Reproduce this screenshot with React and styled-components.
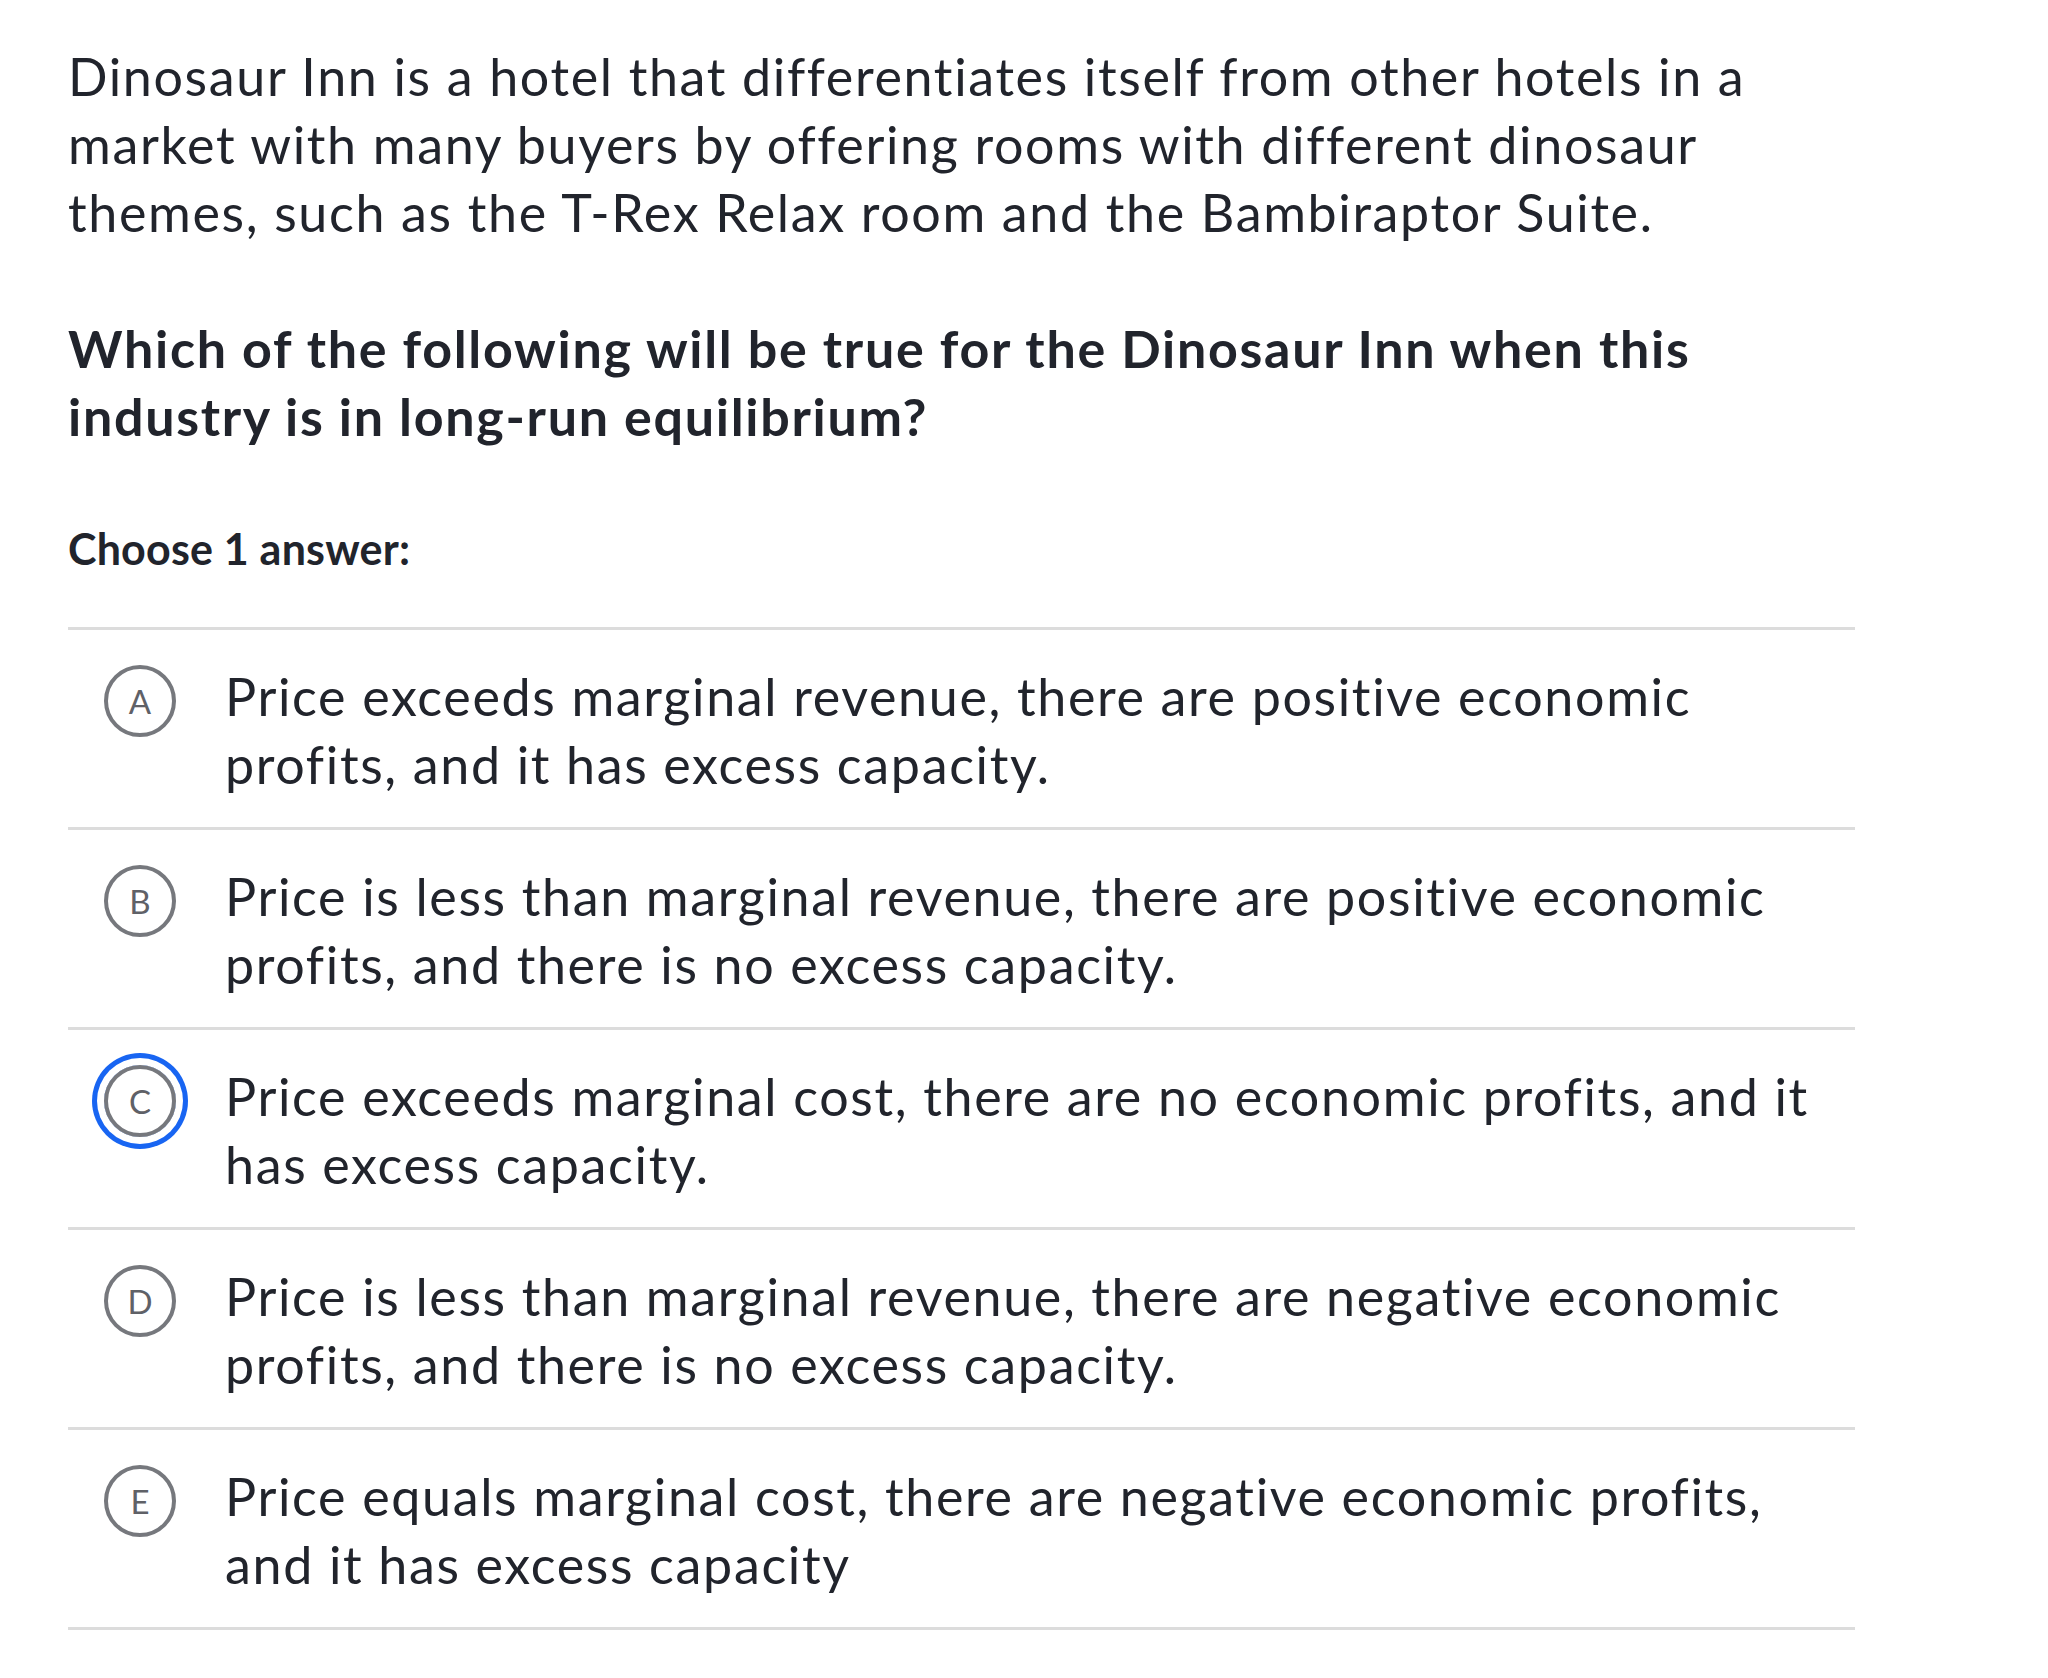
import React from "react";
import styled, { createGlobalStyle } from "styled-components";

const Global = createGlobalStyle`
  html, body { margin: 0; padding: 0; background: #ffffff; }
  body { font-family: Lato, "Open Sans", sans-serif; color: #21242c; }
`;

const Page = styled.main`
  width: 1787px;
  padding: 42px 0 0 68px;
`;

const Paragraph = styled.p`
  margin: 0;
  font-size: 52px;
  line-height: 68px;
  font-weight: 400;
  letter-spacing: 1.65px;
`;

const Question = styled.p`
  margin: 68px 0 0;
  font-size: 52px;
  line-height: 68px;
  font-weight: 700;
  letter-spacing: 1.7px;
`;

const Prompt = styled.div`
  margin-top: 71px;
  font-size: 43px;
  line-height: 56px;
  font-weight: 700;
  letter-spacing: 0.2px;
`;

const List = styled.ul`
  list-style: none;
  margin: 50px 0 0;
  padding: 0;
  border-top: 3px solid #dcdcdc;
`;

const Row = styled.li`
  display: flex;
  align-items: flex-start;
  padding: 32px 0 29px;
  border-bottom: 3px solid #dcdcdc;
`;

const Bubble = styled.span`
  flex: none;
  box-sizing: border-box;
  width: 72px;
  height: 72px;
  margin: 3px 49px 0 36px;
  border-radius: 50%;
  border: 4px solid #76787d;
  display: flex;
  align-items: center;
  justify-content: center;
  font-size: 33px;
  font-weight: 400;
  color: #5f6167;
  box-shadow: ${(p) => (p.$selected ? "0 0 0 7px #ffffff, 0 0 0 12px #1865f2" : "none")};
`;

const ChoiceText = styled.span`
  font-size: 52px;
  line-height: 68px;
  letter-spacing: 1.65px;
  max-width: 1605px;
`;

const choices = [
  ["A", "Price exceeds marginal revenue, there are positive economic profits, and it has excess capacity."],
  ["B", "Price is less than marginal revenue, there are positive economic profits, and there is no excess capacity."],
  ["C", "Price exceeds marginal cost, there are no economic profits, and it has excess capacity."],
  ["D", "Price is less than marginal revenue, there are negative economic profits, and there is no excess capacity."],
  ["E", "Price equals marginal cost, there are negative economic profits, and it has excess capacity"],
];

export default function App() {
  return (
    <>
      <Global />
      <Page>
        <Paragraph>
          Dinosaur Inn is a hotel that differentiates itself from other hotels in a market with many buyers by
          offering rooms with different dinosaur themes, such as the T-Rex Relax room and the Bambiraptor Suite.
        </Paragraph>
        <Question>Which of the following will be true for the Dinosaur Inn when this industry is in long-run equilibrium?</Question>
        <Prompt>Choose 1 answer:</Prompt>
        <List>
          {choices.map(([letter, text]) => (
            <Row key={letter}>
              <Bubble $selected={letter === "C"}>{letter}</Bubble>
              <ChoiceText>{text}</ChoiceText>
            </Row>
          ))}
        </List>
      </Page>
    </>
  );
}
